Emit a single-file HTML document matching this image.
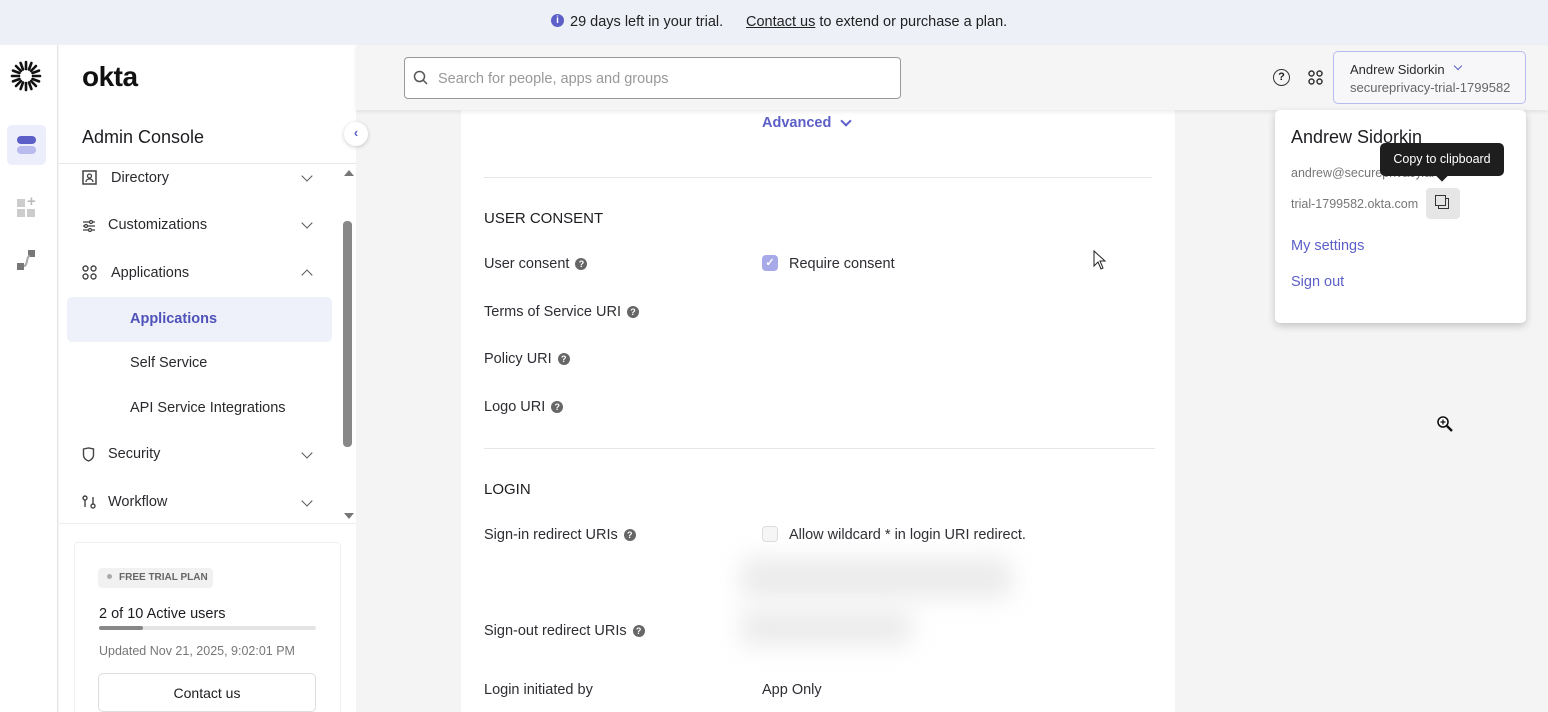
<!DOCTYPE html>
<html><head><style>
*{box-sizing:border-box;margin:0;padding:0}
html,body{width:1548px;height:712px;overflow:hidden}
body{font-family:"Liberation Sans",sans-serif;background:#f4f4f4;position:relative;color:#1d1d21}
.a{position:absolute}
.banner{left:0;top:0;width:1548px;height:45px;background:#eef0f8;font-size:14.5px;color:#222}
.rail{left:0;top:45px;width:58px;height:667px;background:#fff;border-right:1px solid #e6e6e6}
.side{left:59px;top:45px;width:297px;height:667px;background:#fff}
.hdr{left:356px;top:45px;width:1192px;height:65px;background:#f5f5f5;box-shadow:0 2px 4px rgba(0,0,0,.08)}
.card{left:461px;top:110px;width:714px;height:602px;background:#fff}
.nav{font-size:14.5px;color:#2a2a2e}
.lbl{font-size:14.5px;color:#2d2d33}
.q{display:inline-block;width:12px;height:12px;border-radius:50%;background:#666;color:#fff;font-size:9px;text-align:center;line-height:12px;font-weight:bold;vertical-align:1px;margin-left:6px}
.chev{width:8px;height:8px;border-right:1.5px solid #555;border-bottom:1.5px solid #555;transform:rotate(45deg)}
</style></head><body>
<div class="a banner">
 <div class="a" style="left:551px;top:14px;width:13px;height:13px;border-radius:50%;background:#5b5fc7;color:#fff;font-size:10px;font-weight:bold;text-align:center;line-height:13px">i</div>
 <div class="a" style="left:570px;top:14px">29 days left in your trial.</div>
 <div class="a" style="left:746px;top:14px"><span style="text-decoration:underline">Contact us</span> to extend or purchase a plan.</div>
</div>
<div class="a rail">
 <svg class="a" style="left:10px;top:15px" width="32" height="32" viewBox="0 0 32 32"><g stroke="#111" stroke-width="2.6" stroke-linecap="round">
 <line x1="16" y1="2" x2="16" y2="9"/><line x1="16" y1="23" x2="16" y2="30"/><line x1="2" y1="16" x2="9" y2="16"/><line x1="23" y1="16" x2="30" y2="16"/>
 <line x1="6" y1="6" x2="11" y2="11"/><line x1="21" y1="21" x2="26" y2="26"/><line x1="26" y1="6" x2="21" y2="11"/><line x1="6" y1="26" x2="11" y2="21"/>
 <line x1="10.6" y1="3" x2="13" y2="9.5"/><line x1="21.4" y1="29" x2="19" y2="22.5"/><line x1="3" y1="21.4" x2="9.5" y2="19"/><line x1="29" y1="10.6" x2="22.5" y2="13"/>
 <line x1="21.4" y1="3" x2="19" y2="9.5"/><line x1="10.6" y1="29" x2="13" y2="22.5"/><line x1="3" y1="10.6" x2="9.5" y2="13"/><line x1="29" y1="21.4" x2="22.5" y2="19"/></g></svg>
 <div class="a" style="left:7px;top:80px;width:39px;height:40px;background:#eceefb;border-radius:5px"></div>
 <div class="a" style="left:17px;top:91px;width:19px;height:8px;border-radius:4px;background:#5b5fc7"></div>
 <div class="a" style="left:17px;top:101px;width:19px;height:8px;border-radius:4px;background:#b9bbee"></div>
 <div class="a" style="left:17px;top:154px;width:8px;height:8px;background:#ccc"></div><div class="a" style="left:27px;top:148px;font-size:15px;color:#bbb;font-weight:bold">+</div>
 <div class="a" style="left:17px;top:164px;width:8px;height:8px;background:#ccc"></div><div class="a" style="left:27px;top:164px;width:8px;height:8px;background:#ccc"></div>
 <svg class="a" style="left:16px;top:205px" width="22" height="26" viewBox="0 0 22 26"><rect x="12" y="0" width="7" height="7" fill="#777"/><rect x="1" y="13" width="7" height="7" fill="#777"/><path d="M8 16 C12 16 10 6 14 6" stroke="#aaa" stroke-width="2" fill="none"/></svg>
</div>
<div class="a side">
 <div class="a" style="left:23px;top:16px;font-size:28px;font-weight:bold;letter-spacing:-0.5px;color:#111">okta</div>
 <div class="a" style="left:23px;top:82px;font-size:18px">Admin Console</div>
 <div class="a" style="left:0;top:118px;width:297px;height:1px;background:#e8e8e8"></div>
 <svg class="a" style="left:23px;top:125px" width="15" height="15" viewBox="0 0 15 15"><rect x="1" y="1" width="13" height="13" fill="none" stroke="#444" stroke-width="1.5"/><circle cx="7.5" cy="6" r="2" fill="none" stroke="#444" stroke-width="1.3"/><path d="M4 12 C4 8 11 8 11 12" fill="none" stroke="#444" stroke-width="1.3"/></svg>
 <div class="a nav" style="left:52px;top:125px">Directory</div><div class="a chev" style="left:244px;top:127px"></div>
 <svg class="a" style="left:23px;top:174px" width="14" height="14" viewBox="0 0 14 14" stroke="#444" stroke-width="1.3" fill="none"><line x1="1" y1="3" x2="13" y2="3"/><line x1="1" y1="7" x2="13" y2="7"/><line x1="1" y1="11" x2="13" y2="11"/><circle cx="9" cy="3" r="1.5" fill="#fff"/><circle cx="4" cy="7" r="1.5" fill="#fff"/><circle cx="8" cy="11" r="1.5" fill="#fff"/></svg>
 <div class="a nav" style="left:49px;top:172px">Customizations</div><div class="a chev" style="left:244px;top:174px"></div>
 <svg class="a" style="left:23px;top:220px" width="15" height="15" viewBox="0 0 15 15" stroke="#444" stroke-width="1.4" fill="none"><circle cx="3.5" cy="3.5" r="2.5"/><circle cx="11.5" cy="3.5" r="2.5"/><circle cx="3.5" cy="11.5" r="2.5"/><circle cx="11.5" cy="11.5" r="2.5"/></svg>
 <div class="a nav" style="left:52px;top:220px">Applications</div><div class="a chev" style="left:244px;top:226px;transform:rotate(-135deg)"></div>
 <div class="a" style="left:8px;top:252px;width:265px;height:45px;background:#eef0fa;border-radius:5px"></div>
 <div class="a" style="left:71px;top:266px;font-size:14.5px;color:#4f52b8;font-weight:bold">Applications</div>
 <div class="a nav" style="left:71px;top:310px">Self Service</div>
 <div class="a nav" style="left:71px;top:355px">API Service Integrations</div>
 <svg class="a" style="left:23px;top:402px" width="13" height="15" viewBox="0 0 13 15"><path d="M1.5 2 L6.5 1 L11.5 2 L11.5 8 C11.5 11 9 13 6.5 14 C4 13 1.5 11 1.5 8 Z" fill="none" stroke="#444" stroke-width="1.4"/></svg>
 <div class="a nav" style="left:49px;top:401px">Security</div><div class="a chev" style="left:244px;top:404px"></div>
 <svg class="a" style="left:23px;top:450px" width="14" height="14" viewBox="0 0 14 14" stroke="#444" stroke-width="1.4" fill="none"><circle cx="3" cy="3" r="2"/><circle cx="11" cy="11" r="2"/><path d="M3 5 L3 12 M11 9 L11 2"/></svg>
 <div class="a nav" style="left:49px;top:449px">Workflow</div><div class="a chev" style="left:244px;top:452px"></div>
 <div class="a" style="left:285px;top:125px;width:0;height:0;border:5px solid transparent;border-bottom:6px solid #777;border-top:0"></div>
 <div class="a" style="left:284px;top:176px;width:9px;height:226px;background:#888;border-radius:4px"></div>
 <div class="a" style="left:285px;top:468px;width:0;height:0;border:5px solid transparent;border-top:6px solid #777;border-bottom:0"></div>
 <div class="a" style="left:0;top:478px;width:297px;height:1px;background:#eee"></div>
 <div class="a" style="left:15px;top:497px;width:267px;height:180px;border:1px solid #efefef;border-radius:4px"></div>
 <div class="a" style="left:39px;top:523px;width:115px;height:20px;background:#f1f1f1;border-radius:4px;font-size:10px;font-weight:bold;color:#666;line-height:20px;padding-left:9px"><span style="display:inline-block;width:5px;height:5px;border-radius:50%;background:#aaa;vertical-align:1px;margin-right:7px"></span>FREE TRIAL PLAN</div>
 <div class="a" style="left:40px;top:561px;font-size:14.5px">2 of 10 Active users</div>
 <div class="a" style="left:40px;top:581px;width:217px;height:4px;background:#e4e4e4;border-radius:2px"></div>
 <div class="a" style="left:40px;top:581px;width:44px;height:4px;background:#888;border-radius:2px"></div>
 <div class="a" style="left:40px;top:599px;font-size:12.5px;color:#777">Updated Nov 21, 2025, 9:02:01 PM</div>
 <div class="a" style="left:39px;top:628px;width:218px;height:39px;border:1px solid #ddd;border-radius:5px;text-align:center;line-height:38px;font-size:14px">Contact us</div>
</div>
<div class="a card">
 <div class="a" style="left:301px;top:5px;font-size:14.5px;color:#5b5fc7;font-weight:bold">Advanced</div>
 <div class="a" style="left:381px;top:7px;width:8px;height:8px;border-right:2px solid #5b5fc7;border-bottom:2px solid #5b5fc7;transform:rotate(45deg)"></div>
 <div class="a" style="left:23px;top:67px;width:668px;height:1px;background:#e6e6e6"></div>
 <div class="a" style="left:23px;top:100px;font-size:15px;color:#1d1d21">USER CONSENT</div>
 <div class="a lbl" style="left:23px;top:146px">User consent<span class="q">?</span></div>
 <div class="a" style="left:301px;top:145px;width:16px;height:16px;border-radius:4px;background:#a7a9e8;color:#fff;font-size:11px;text-align:center;line-height:16px;font-weight:bold">✓</div>
 <div class="a lbl" style="left:328px;top:146px">Require consent</div>
 <div class="a lbl" style="left:23px;top:194px">Terms of Service URI<span class="q">?</span></div>
 <div class="a lbl" style="left:23px;top:241px">Policy URI<span class="q">?</span></div>
 <div class="a lbl" style="left:23px;top:289px">Logo URI<span class="q">?</span></div>
 <div class="a" style="left:23px;top:338px;width:671px;height:1px;background:#e6e6e6"></div>
 <div class="a" style="left:23px;top:371px;font-size:15px">LOGIN</div>
 <div class="a lbl" style="left:23px;top:417px">Sign-in redirect URIs<span class="q">?</span></div>
 <div class="a" style="left:301px;top:416px;width:16px;height:16px;border-radius:4px;border:1px solid #ddd;background:#f6f6f6"></div>
 <div class="a lbl" style="left:328px;top:417px">Allow wildcard * in login URI redirect.</div>
 <div class="a" style="left:280px;top:448px;width:270px;height:40px;background:#e6e6e6;filter:blur(12px);opacity:.8"></div>
 <div class="a" style="left:280px;top:500px;width:170px;height:35px;background:#e6e6e6;filter:blur(12px);opacity:.8"></div>
 <div class="a lbl" style="left:23px;top:513px">Sign-out redirect URIs<span class="q">?</span></div>
 <div class="a lbl" style="left:23px;top:572px">Login initiated by</div>
 <div class="a lbl" style="left:301px;top:572px">App Only</div>
</div>
<div class="a" style="left:344px;top:122px;width:24px;height:24px;border-radius:50%;background:#fff;box-shadow:0 1px 4px rgba(0,0,0,.2);color:#5b5fc7;text-align:center;line-height:22px;font-size:13px;font-weight:bold">‹</div>
<div class="a hdr">
 <div class="a" style="left:48px;top:12px;width:497px;height:42px;border:1px solid #999;border-radius:4px;background:#fff"></div>
 <svg class="a" style="left:57px;top:25px" width="16" height="16" viewBox="0 0 16 16"><circle cx="6.5" cy="6.5" r="5" fill="none" stroke="#555" stroke-width="1.5"/><line x1="10" y1="10" x2="14" y2="14" stroke="#555" stroke-width="1.5"/></svg>
 <div class="a" style="left:82px;top:26px;font-size:14.5px;color:#999">Search for people, apps and groups</div>
 <div class="a" style="left:917px;top:24px;width:17px;height:17px;border-radius:50%;border:1.6px solid #333;font-size:11px;text-align:center;line-height:14px;font-weight:bold">?</div>
 <svg class="a" style="left:952px;top:25px" width="15" height="15" viewBox="0 0 15 15" stroke="#333" stroke-width="1.5" fill="none"><circle cx="3.5" cy="3.5" r="2.5"/><circle cx="11.5" cy="3.5" r="2.5"/><circle cx="3.5" cy="11.5" r="2.5"/><circle cx="11.5" cy="11.5" r="2.5"/></svg>
 <div class="a" style="left:977px;top:6px;width:193px;height:53px;border:1px solid #b9bbee;border-radius:5px;background:#f7f7f9"></div>
 <div class="a" style="left:994px;top:17px;font-size:13px;color:#2a2a2e">Andrew Sidorkin</div>
 <div class="a" style="left:1099px;top:18px;width:6px;height:6px;border-right:1.5px solid #5b5fc7;border-bottom:1.5px solid #5b5fc7;transform:rotate(45deg)"></div>
 <div class="a" style="left:994px;top:35px;font-size:13px;color:#666">secureprivacy-trial-1799582</div>
</div>
<div class="a" style="left:1275px;top:110px;width:251px;height:213px;background:#fff;border-radius:5px;box-shadow:0 3px 8px rgba(0,0,0,.2)">
 <div class="a" style="left:16px;top:17px;font-size:18px;color:#1d1d21">Andrew Sidorkin</div>
 <div class="a" style="left:16px;top:56px;font-size:12.5px;color:#777">andrew@secureprivacy.ai</div>
 <div class="a" style="left:16px;top:87px;font-size:12.5px;color:#777">trial-1799582.okta.com</div>
 <div class="a" style="left:151px;top:78px;width:34px;height:31px;background:#e6e6e6;border-radius:4px"></div>
 <div class="a" style="left:163px;top:88px;width:11px;height:11px;border:1.5px solid #333"></div>
 <div class="a" style="left:160px;top:85px;width:11px;height:11px;border:1.5px solid #333;background:#e6e6e6"></div>
 <div class="a" style="left:16px;top:128px;font-size:14.5px;color:#5b5fc7">My settings</div>
 <div class="a" style="left:16px;top:164px;font-size:14.5px;color:#5b5fc7">Sign out</div>
</div>
<div class="a" style="left:1380px;top:143px;width:124px;height:33px;background:#1e1e1e;border-radius:5px;color:#fff;font-size:12.5px;text-align:center;line-height:33px">Copy to clipboard</div>
<div class="a" style="left:1438px;top:172px;width:8px;height:8px;background:#1e1e1e;transform:rotate(45deg)"></div>
<svg class="a" style="left:1093px;top:250px" width="14" height="20" viewBox="0 0 14 20"><path d="M1 1 L1 16 L5 12 L8 19 L10 18 L7 11 L12 11 Z" fill="#fff" stroke="#222" stroke-width="1"/></svg>
<svg class="a" style="left:1436px;top:415px" width="18" height="18" viewBox="0 0 18 18"><circle cx="7" cy="7" r="5" fill="#fff" stroke="#111" stroke-width="1.6"/><line x1="11" y1="11" x2="16" y2="16" stroke="#111" stroke-width="2.4"/><line x1="4.5" y1="7" x2="9.5" y2="7" stroke="#111" stroke-width="1.3"/><line x1="7" y1="4.5" x2="7" y2="9.5" stroke="#111" stroke-width="1.3"/></svg>
</body></html>
